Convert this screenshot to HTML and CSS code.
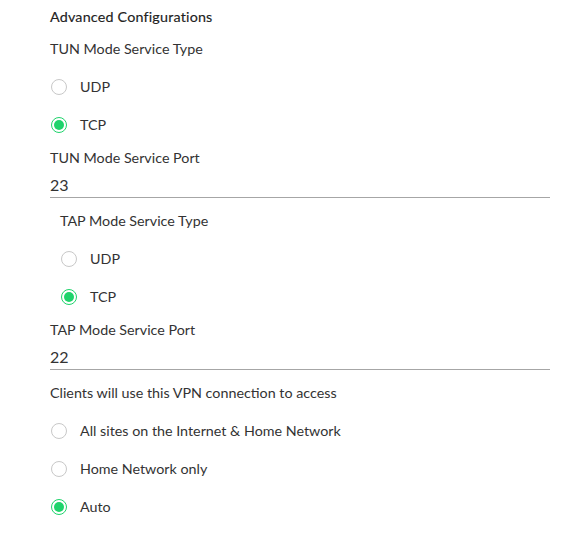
FILE: index.html
```
<!DOCTYPE html>
<html>
<head>
<meta charset="utf-8">
<link rel="stylesheet" href="styles.css">
</head>
<body>
<div class="panel">
  <div class="title">Advanced Configurations</div>

  <div class="label">TUN Mode Service Type</div>
  <div class="radio-row"><span class="radio"></span><span class="opt">UDP</span></div>
  <div class="radio-row"><span class="radio checked"></span><span class="opt">TCP</span></div>

  <div class="field-label">TUN Mode Service Port</div>
  <div class="input">23</div>

  <div class="indent">
    <div class="label">TAP Mode Service Type</div>
    <div class="radio-row"><span class="radio"></span><span class="opt">UDP</span></div>
    <div class="radio-row"><span class="radio checked"></span><span class="opt">TCP</span></div>
  </div>

  <div class="field-label">TAP Mode Service Port</div>
  <div class="input">22</div>

  <div class="label spaced">Clients will use this VPN connection to access</div>
  <div class="radio-row"><span class="radio"></span><span class="opt">All sites on the Internet &amp; Home Network</span></div>
  <div class="radio-row"><span class="radio"></span><span class="opt">Home Network only</span></div>
  <div class="radio-row"><span class="radio checked"></span><span class="opt">Auto</span></div>
</div>
</body>
</html>
```
FILE: styles.css
```
html, body {
  margin: 0;
  padding: 0;
  background: #ffffff;
}
body {
  font-family: Lato, "Noto Sans", sans-serif;
  font-size: 14.3px;
  color: #333333;
}
.panel {
  width: 500px;
  padding-left: 50px;
}
.title {
  height: 33px;
  line-height: 33px;
  font-weight: 400;
  letter-spacing: 0.2px;
  -webkit-text-stroke: 0.15px #222222;
  color: #222222;
}
.label {
  line-height: 32px;
  padding-bottom: 3px;
}
.label.spaced {
  padding-top: 7px;
}
.indent {
  padding-left: 10px;
  padding-top: 7px;
}
.field-label {
  line-height: 28px;
}
.radio-row {
  display: flex;
  align-items: center;
  height: 38px;
}
.radio {
  box-sizing: border-box;
  width: 16px;
  height: 16px;
  border: 1px solid #c8c8c8;
  border-radius: 50%;
  margin-left: 1px;
  margin-right: 13px;
  position: relative;
  flex: none;
}
.radio.checked {
  border: 1.5px solid #1ed36b;
}
.radio.checked::after {
  content: "";
  position: absolute;
  left: 50%;
  top: 50%;
  width: 10px;
  height: 10px;
  margin: -5px 0 0 -5px;
  border-radius: 50%;
  background: #1ed36b;
}
.opt {
  line-height: 20px;
}
.input {
  box-sizing: border-box;
  height: 26px;
  line-height: 25px;
  font-size: 16px;
  border-bottom: 1px solid #a6a6a6;
}
```
